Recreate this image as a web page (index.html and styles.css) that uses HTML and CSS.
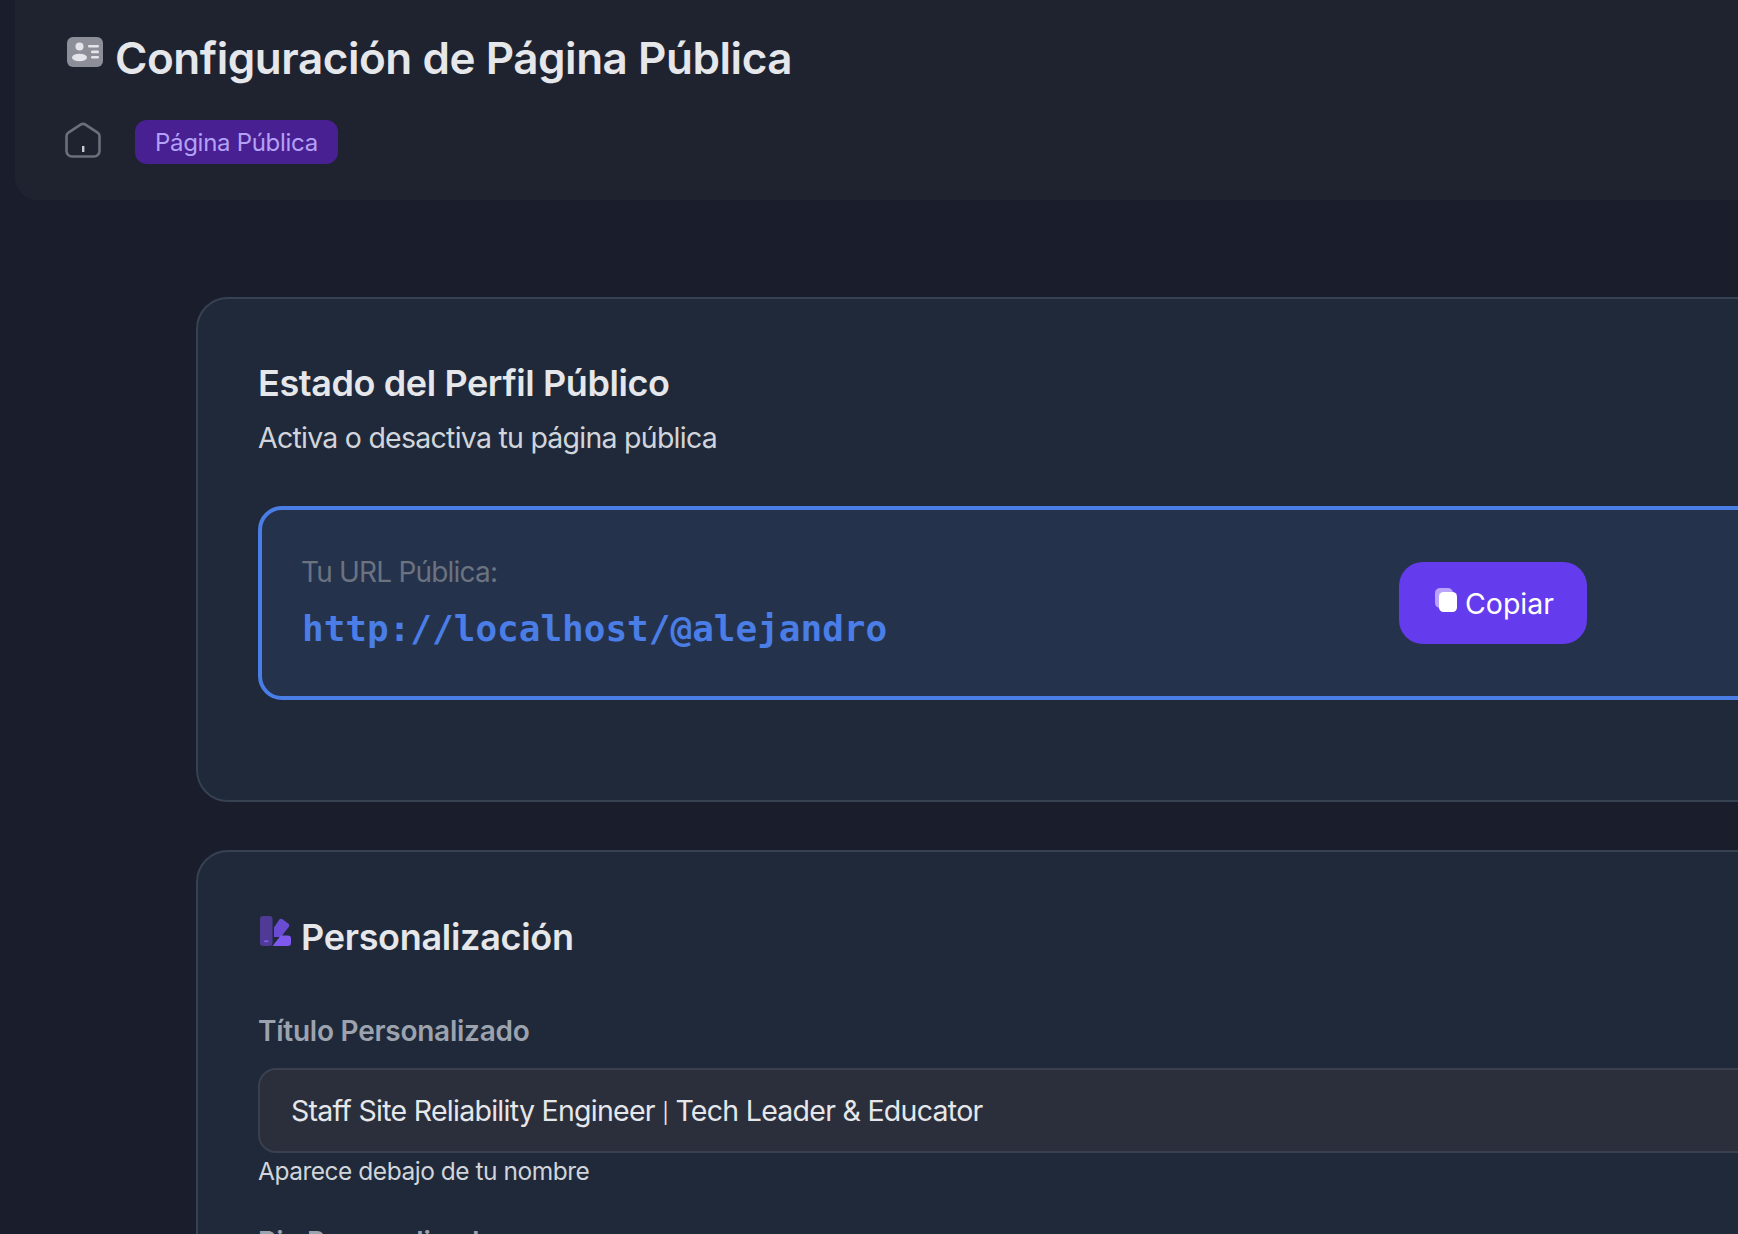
FILE: index.html
```html
<!DOCTYPE html>
<html lang="es">
<head>
<meta charset="utf-8">
<title>Configuración de Página Pública</title>
<link rel="stylesheet" href="styles.css">
</head>
<body>
<div class="page">
  <header class="page-header">
    <h1 class="page-title">
      <svg class="title-icon" viewBox="0 0 36 30" aria-hidden="true">
        <rect width="36" height="30" rx="6" fill="#8c8e98"/>
        <circle cx="12.5" cy="9.5" r="4" fill="#e4e5ea"/>
        <ellipse cx="12.5" cy="20.5" rx="7.5" ry="3.8" fill="#e4e5ea"/>
        <rect x="21" y="8" width="11" height="2.6" rx="1.3" fill="#e4e5ea"/>
        <rect x="24" y="13.6" width="8" height="2.6" rx="1.3" fill="#e4e5ea"/>
        <rect x="24" y="19" width="8" height="2.6" rx="1.3" fill="#e4e5ea"/>
      </svg>
      <span>Configuración de Página Pública</span>
    </h1>
    <nav class="crumbs">
      <svg class="home-icon" viewBox="0 0 36 36" aria-hidden="true">
        <path d="M15.6 2.6 3.4 10.6A4 4 0 0 0 1.500 14V29a5.500 5.500 0 0 0 5.500 5.500H29a5.500 5.500 0 0 0 5.500-5.500V14a4 4 0 0 0-1.900-3.400L20.400 2.600a4.400 4.400 0 0 0-4.800 0Z" fill="none" stroke="#6b6f7a" stroke-width="2.600"/>
        <rect x="17" y="24" width="2.400" height="6" fill="#c9cbd1"/>
      </svg>
      <span class="crumb-badge">Página Pública</span>
    </nav>
  </header>

  <main class="content">
    <section class="card card-status">
      <h2 class="card-title">Estado del Perfil Público</h2>
      <p class="card-sub">Activa o desactiva tu página pública</p>
      <div class="url-box">
        <div class="url-text">
          <div class="url-label">Tu URL Pública:</div>
          <div class="url-value">http://localhost/@alejandro</div>
        </div>
        <button class="copy-btn" type="button">
          <svg class="copy-icon" viewBox="0 0 22 24" aria-hidden="true">
            <rect x="0" y="0" width="18" height="20" rx="5" fill="#b9a4fa"/>
            <rect x="4" y="4" width="18" height="20" rx="4.500" fill="#fff"/>
          </svg>
          <span>Copiar</span>
        </button>
      </div>
    </section>

    <section class="card card-custom">
      <h2 class="section-title">
        <svg class="swatch-icon" viewBox="0 0 31 30" aria-hidden="true">
          <path d="M14 11.500 19 4a2.500 2.500 0 0 1 3.500-.7l5.700 4.200a2.500 2.500 0 0 1 .5 3.500L21 21H14Z" fill="#6a4bd3"/>
          <path d="M20.800 19.500H28a3 3 0 0 1 3 3V27a3 3 0 0 1-3 3H12.500Z" fill="#7f58ee"/>
          <path d="M3 0h6.500a3 3 0 0 1 3 3v24a3 3 0 0 1-3 3H3a3 3 0 0 1-3-3V3a3 3 0 0 1 3-3Z" fill="#4f3b96"/>
          <ellipse cx="6.200" cy="25.300" rx="2.500" ry="1.100" fill="#7f58ee"/>
        </svg>
        <span>Personalización</span>
      </h2>
      <div class="field">
        <div class="field-label">Título Personalizado</div>
        <div class="field-input"><span>Staff Site Reliability Engineer <span class="pipe">|</span> Tech Leader &amp; Educator</span></div>
        <div class="field-help">Aparece debajo de tu nombre</div>
      </div>
      <div class="field">
        <div class="field-label">Bio Personalizada</div>
      </div>
    </section>
  </main>
</div>
</body>
</html>
```
FILE: styles.css
```css
* { box-sizing: border-box; }
html, body {
  margin: 0;
  height: 100%;
  overflow: hidden;
  background: #1a1e2c;
}
body {
  font-family: Inter, "Liberation Sans", sans-serif;
  color: #e5e7eb;
}
.page {
  width: 2000px;
  margin-top: -20px;
}
.page-header {
  margin-left: 15px;
  height: 220px;
  padding: 51px 50px 0;
  background: #1f2330;
  border-radius: 22px;
}
.page-title {
  display: flex;
  align-items: flex-start;
  gap: 12px;
  margin: 0;
  font-size: 44px;
  line-height: 54px;
  font-weight: 600;
  letter-spacing: -0.45px;
  color: #e5e7eb;
}
.title-icon {
  width: 36px;
  height: 30px;
  margin: 6px 0 0 2px;
  flex: none;
}
.crumbs {
  display: flex;
  align-items: center;
  gap: 33px;
  margin-top: 35px;
}
.home-icon {
  width: 36px;
  height: 36px;
  margin: -5px 1px 0 0;
  flex: none;
}
.crumb-badge {
  display: flex;
  align-items: center;
  height: 44px;
  padding: 0 20px;
  border-radius: 12px;
  background: #482091;
  color: #b3a0f7;
  font-size: 24px;
  letter-spacing: -0.3px;
}
.content {
  display: flex;
  flex-direction: column;
  gap: 48px;
  width: 1700px;
  margin: 97px 0 0 196px;
}
.card {
  padding: 61px 60px 0;
  background: #1f2939;
  border: 2px solid #364151;
  border-radius: 32px;
}
.card-status {
  height: 505px;
}
.card-custom {
  padding-top: 62px;
}
.card-title {
  margin: 0;
  font-size: 36px;
  line-height: 46px;
  font-weight: 600;
  letter-spacing: -0.4px;
  color: #e5e7eb;
}
.card-sub {
  margin: 10px 0 0;
  font-size: 28.5px;
  line-height: 44px;
  letter-spacing: -0.75px;
  color: #d1d5db;
}
.url-box {
  display: flex;
  align-items: center;
  height: 194px;
  margin: 46px 0 0;
  padding: 0 0 0 39px;
  background: #24324c;
  border: 4px solid #4a7de6;
  border-radius: 24px;
}
.url-text {
  width: 1098px;
  flex: none;
  margin-top: -2px;
}
.url-label {
  font-size: 28px;
  line-height: 38px;
  letter-spacing: -0.8px;
  color: #6b7280;
}
.url-value {
  margin-top: 15px;
  margin-left: 1px;
  font-family: "DejaVu Sans Mono", monospace;
  font-size: 36px;
  line-height: 46px;
  font-weight: 700;
  color: #4a7de6;
}
.copy-btn {
  display: flex;
  align-items: center;
  justify-content: center;
  gap: 8px;
  width: 188px;
  height: 82px;
  flex: none;
  padding: 0;
  border: 0;
  border-radius: 24px;
  background: #643cee;
  color: #fff;
  font-family: Inter, sans-serif;
  font-size: 28.5px;
}
.copy-icon {
  width: 22px;
  height: 24px;
  margin: -6px 0 0 3px;
  flex: none;
}
.section-title {
  display: flex;
  align-items: flex-start;
  gap: 10px;
  margin: 0;
  font-size: 36px;
  line-height: 46px;
  font-weight: 600;
  letter-spacing: -0.3px;
  color: #e5e7eb;
}
.swatch-icon {
  width: 31px;
  height: 30px;
  margin: 2px 0 0 2px;
  flex: none;
}
.field {
  margin-top: 33px;
}
.card-custom .field:first-of-type {
  margin-top: 51px;
}
.field-label {
  font-size: 28px;
  line-height: 40px;
  font-weight: 600;
  letter-spacing: -0.25px;
  color: #9ca3af;
}
.field-input {
  display: flex;
  align-items: center;
  height: 85px;
  margin-top: 17px;
  padding: 0 31px;
  background: #2b2f3b;
  border: 2px solid #3a404e;
  border-radius: 18px;
  font-size: 28.5px;
  letter-spacing: -0.72px;
  color: #e5e7eb;
}
.pipe {
  font-size: 20px;
  vertical-align: 1px;
}
.field-help {
  margin-top: 0;
  font-size: 24.5px;
  line-height: 36px;
  letter-spacing: -0.48px;
  color: #d1d5db;
}
```
